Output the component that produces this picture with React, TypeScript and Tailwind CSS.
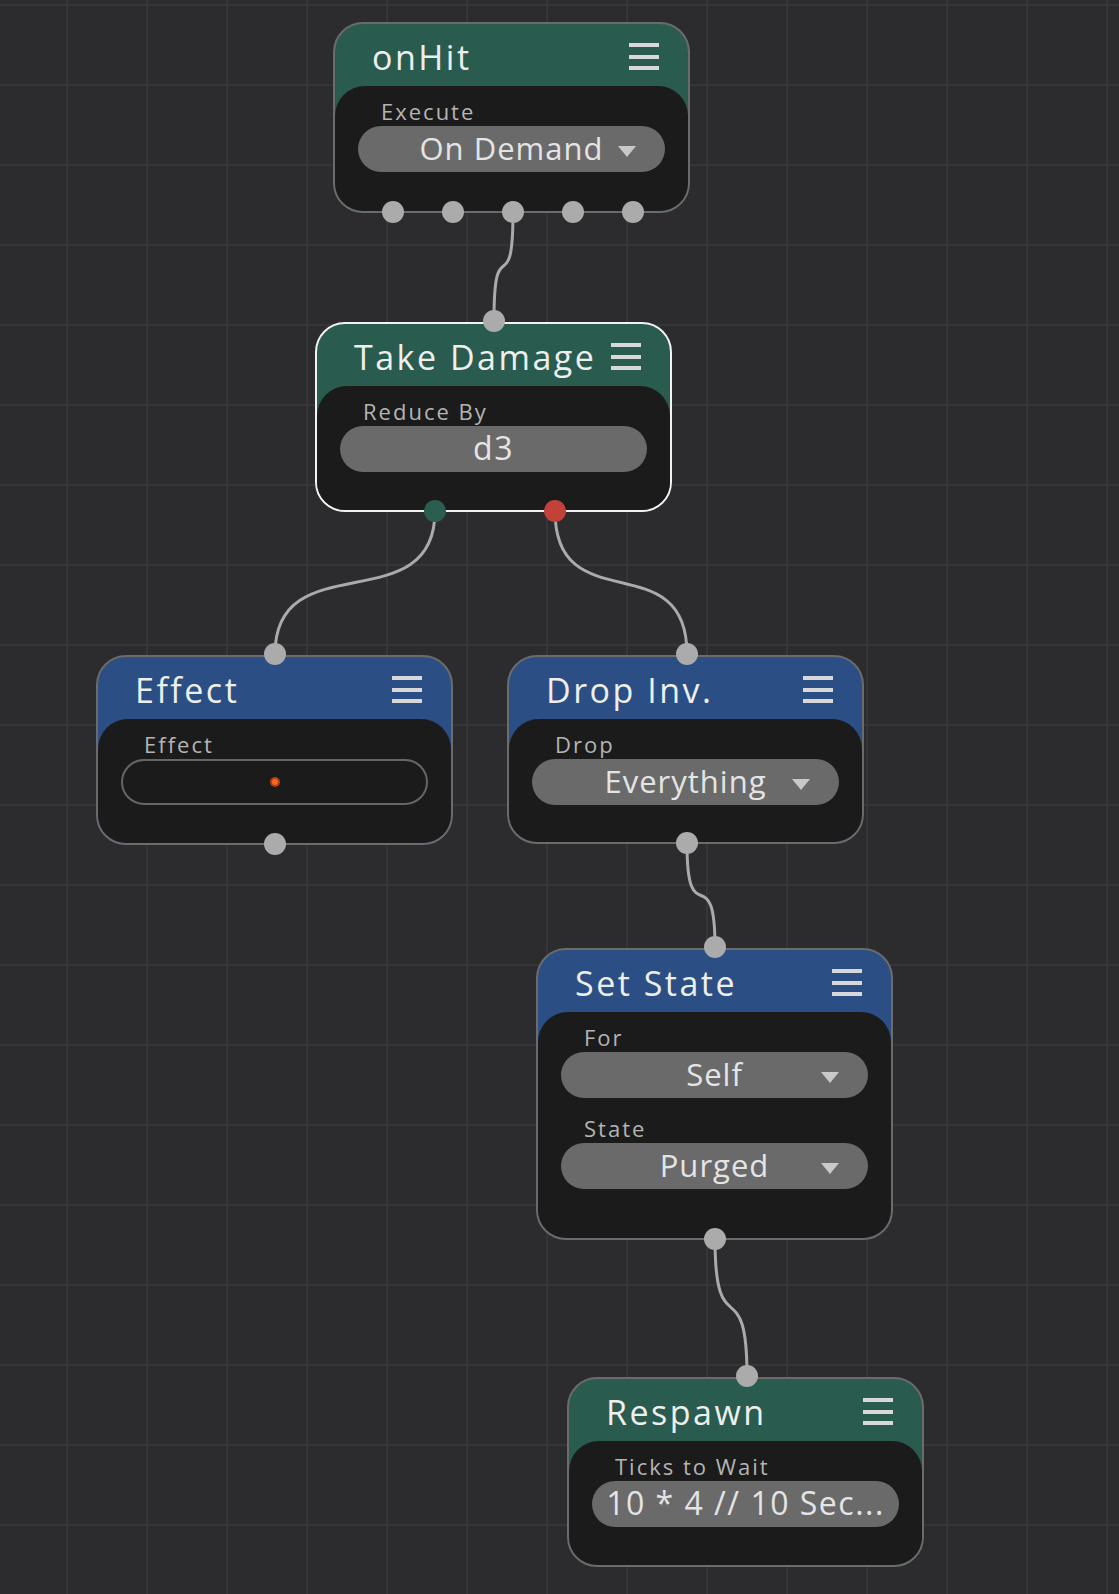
import React from 'react';

type Field = {
  label: string;
  value: string;
  kind: 'select' | 'text' | 'effect';
};

type Port = { x: number; color?: string };

type GraphNode = {
  id: string;
  title: string;
  tone: 'green' | 'blue';
  x: number;
  y: number;
  h: number;
  selected?: boolean;
  fields: Field[];
  input?: number;
  outputs: Port[];
};

const NODE_W = 357;

const nodes: GraphNode[] = [
  {
    id: 'onHit',
    title: 'onHit',
    tone: 'green',
    x: 333,
    y: 22,
    h: 191,
    fields: [{ label: 'Execute', value: 'On Demand', kind: 'select' }],
    outputs: [{ x: 60 }, { x: 120 }, { x: 180 }, { x: 240 }, { x: 300 }],
  },
  {
    id: 'takeDamage',
    title: 'Take Damage',
    tone: 'green',
    x: 315,
    y: 322,
    h: 190,
    selected: true,
    fields: [{ label: 'Reduce By', value: 'd3', kind: 'text' }],
    input: 179,
    outputs: [
      { x: 120, color: 'bg-[#2b5e50]' },
      { x: 240, color: 'bg-[#c4413a]' },
    ],
  },
  {
    id: 'effect',
    title: 'Effect',
    tone: 'blue',
    x: 96,
    y: 655,
    h: 190,
    fields: [{ label: 'Effect', value: '', kind: 'effect' }],
    input: 179,
    outputs: [{ x: 179 }],
  },
  {
    id: 'dropInv',
    title: 'Drop Inv.',
    tone: 'blue',
    x: 507,
    y: 655,
    h: 189,
    fields: [{ label: 'Drop', value: 'Everything', kind: 'select' }],
    input: 180,
    outputs: [{ x: 180 }],
  },
  {
    id: 'setState',
    title: 'Set State',
    tone: 'blue',
    x: 536,
    y: 948,
    h: 292,
    fields: [
      { label: 'For', value: 'Self', kind: 'select' },
      { label: 'State', value: 'Purged', kind: 'select' },
    ],
    input: 179,
    outputs: [{ x: 179 }],
  },
  {
    id: 'respawn',
    title: 'Respawn',
    tone: 'green',
    x: 567,
    y: 1377,
    h: 190,
    // already shortened by the editor
    fields: [{ label: 'Ticks to Wait', value: '10 * 4 // 10 Sec...', kind: 'text' }],
    input: 180,
    outputs: [],
  },
];

// port centre to port centre
const wires: [number, number, number, number][] = [
  [513, 212, 494, 320],
  [435, 511, 275, 654],
  [555, 511, 687, 654],
  [687, 844, 715, 947],
  [715, 1239, 747, 1376],
];

function wirePath([x1, y1, x2, y2]: [number, number, number, number]) {
  const dy = y2 - y1;
  const k = Math.min(dy, dy * 0.5 + 40);
  return `M ${x1} ${y1} C ${x1} ${y1 + k}, ${x2} ${y2 - k}, ${x2} ${y2}`;
}

function Hamburger() {
  return (
    <div className="flex h-[27px] w-[30px] flex-col justify-between">
      <div className="h-[4px] bg-[#d8d8d8]" />
      <div className="h-[4px] bg-[#d8d8d8]" />
      <div className="h-[4px] bg-[#d8d8d8]" />
    </div>
  );
}

function FieldRow({ field, first }: { field: Field; first: boolean }) {
  return (
    <div className={first ? '' : 'mt-[18px]'}>
      <div className="pl-[23px] text-[22px] leading-[24px] tracking-[2px] text-[#b4b4b4]">
        {field.label}
      </div>

      {field.kind === 'effect' ? (
        <div className="mt-[3px] flex h-[46px] items-center justify-center rounded-full border-2 border-[#666666]">
          <div className="h-[10px] w-[10px] rounded-full border-2 border-[#b63c14] bg-[#f06a24]" />
        </div>
      ) : field.kind === 'select' ? (
        <div className="relative mt-[3px] flex h-[46px] items-center justify-center rounded-full bg-[#6a6a6a] pb-[3px] text-[31px] leading-[40px] tracking-[1px] text-[#e4e4e4]">
          {field.value}
          <div className="absolute right-[29px] top-[20px] h-0 w-0 border-x-[9.5px] border-t-[11px] border-x-transparent border-t-[#c9c9c9]" />
        </div>
      ) : (
        <div className="mt-[3px] flex h-[46px] items-center justify-center whitespace-nowrap rounded-full bg-[#6a6a6a] px-[16px] pb-[3px] text-[32px] leading-[42px] tracking-[1.5px] text-[#e4e4e4]">
          {field.value}
        </div>
      )}
    </div>
  );
}

function NodeCard({ node }: { node: GraphNode }) {
  const header = node.tone === 'green' ? 'bg-[#295c4f]' : 'bg-[#2b4e85]';
  const border = node.selected ? 'border-[#f2f2f2]' : 'border-[#6b6b6b]';

  return (
    <div
      className="absolute"
      style={{ left: node.x, top: node.y, width: NODE_W, height: node.h }}
    >
      <div
        className={`flex h-full flex-col overflow-hidden rounded-[30px] border-2 ${border} ${header}`}
      >
        {/* Header */}
        <div className="flex h-[62px] shrink-0 items-center justify-between pl-[37px] pr-[29px] pt-[3px]">
          <span className="text-[34px] leading-none tracking-[2.5px] text-[#eeeeee]">
            {node.title}
          </span>
          <Hamburger />
        </div>

        {/* Body */}
        <div className="flex-1 rounded-t-[30px] bg-[#1b1b1b] px-[23px] pt-[13px]">
          {node.fields.map((f, i) => (
            <FieldRow key={f.label} field={f} first={i === 0} />
          ))}
        </div>
      </div>

      {/* Ports */}
      {node.input !== undefined && (
        <div
          className="absolute top-[-12px] h-[22px] w-[22px] rounded-full bg-[#ababab]"
          style={{ left: node.input - 11 }}
        />
      )}
      {node.outputs.map((p, i) => (
        <div
          key={i}
          className={`absolute bottom-[-10px] h-[22px] w-[22px] rounded-full ${p.color ?? 'bg-[#ababab]'}`}
          style={{ left: p.x - 11 }}
        />
      ))}
    </div>
  );
}

export default function App() {
  return (
    <div className="relative h-[1594px] w-[1119px] overflow-hidden bg-[#2c2c2e] bg-[linear-gradient(to_right,#363638_2px,transparent_2px),linear-gradient(to_bottom,#363638_2px,transparent_2px)] bg-[size:80px_80px] bg-[position:66px_4px] font-['Open_Sans',sans-serif]">
      <svg className="pointer-events-none absolute inset-0" width={1119} height={1594}>
        {wires.map((w, i) => (
          <path
            key={i}
            d={wirePath(w)}
            fill="none"
            stroke="#aaaaaa"
            strokeWidth={3}
            strokeLinecap="round"
          />
        ))}
      </svg>

      {nodes.map((n) => (
        <NodeCard key={n.id} node={n} />
      ))}
    </div>
  );
}
